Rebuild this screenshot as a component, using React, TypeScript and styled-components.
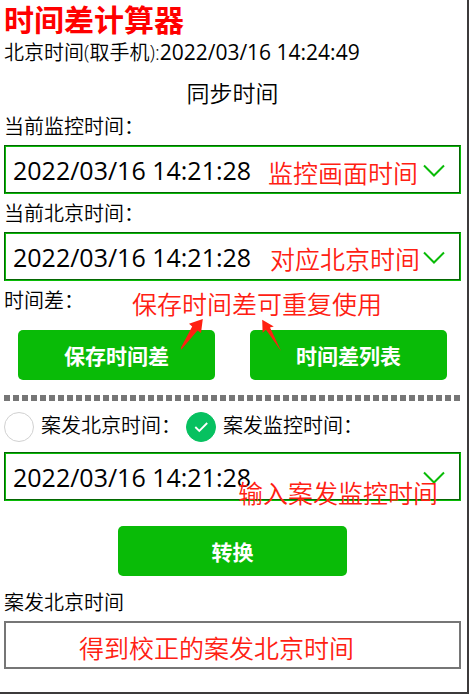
import React, { useState } from "react";
import styled, { createGlobalStyle } from "styled-components";

const GlobalStyle = createGlobalStyle`
  *, *::before, *::after { box-sizing: border-box; }
  body {
    margin: 0;
    background: #fff;
    color: #000;
    font-family: "Open Sans", "Noto Sans CJK SC", sans-serif;
    font-size: 20px;
    font-weight: 350;
  }
`;

const Page = styled.main`
  display: flex;
  flex-direction: column;
  min-height: 100vh;
  padding: 0 6px 23px 4px;
  border-right: 2px solid #3c3a3b;
  border-bottom: 2px solid #3c3a3b;
`;

const Title = styled.h1`
  margin: 0;
  color: #ff0000;
  font-size: 30px;
  font-weight: 700;
  line-height: 40px;
`;

const Clock = styled.p`
  margin: 0;
  line-height: 24px;
`;

const ClockTime = styled.time`
  font-size: 21px;
  font-weight: 400;
`;

const SectionHeading = styled.h2`
  margin: 13px 0 0;
  font-size: 23px;
  font-weight: inherit;
  line-height: 30px;
  text-align: center;
`;

const Label = styled.label`
  display: block;
  padding-top: 1px;
  line-height: 36px;
`;

const Field = styled.div`
  position: relative;
  margin-bottom: 1px;
`;

const TimeSelect = styled.select`
  display: block;
  appearance: none;
  width: 100%;
  height: 49px;
  margin: 0;
  padding: 0 40px 0 7px;
  border: 2px groove #09bb07;
  border-radius: 0;
  background: #fff;
  color: #000;
  font-family: inherit;
  font-size: 25px;
  font-weight: 400;
`;

const Chevron = styled.svg`
  position: absolute;
  top: 19px;
  right: 16px;
  width: 22px;
  height: 14px;
  pointer-events: none;
`;

const Note = styled.span<{ $left: number; $top: number }>`
  position: absolute;
  left: ${(p) => p.$left}px;
  top: ${(p) => p.$top}px;
  color: #ff2012;
  font-size: 25px;
  line-height: 36px;
  white-space: nowrap;
  pointer-events: none;
`;

const DifferenceRow = styled.div`
  position: relative;
  padding-top: 1px;
  line-height: 36px;
`;

const Arrows = styled.svg`
  position: absolute;
  left: 166px;
  top: 28px;
  width: 120px;
  height: 50px;
  z-index: 1;
  pointer-events: none;
`;

const ButtonRow = styled.div`
  display: grid;
  grid-template-columns: 1fr 1fr;
  gap: 35px;
  margin-top: 11px;
  padding: 0 14px;
`;

const Button = styled.button`
  height: 50px;
  padding: 0;
  border: 0;
  border-radius: 5px;
  background: #09bb07;
  color: #fff;
  font-family: inherit;
  font-size: 21px;
  font-weight: 700;
  cursor: pointer;
`;

const ConvertButton = styled(Button)`
  align-self: center;
  width: 50%;
  margin: 24px 0 8px;
`;

const Divider = styled.hr`
  width: 100%;
  height: 6px;
  margin: 15px 0 11px;
  border: 0;
  background: repeating-linear-gradient(to right, #767676 0 6px, transparent 6px 9px);
`;

const Choices = styled.div`
  display: flex;
  gap: 5px;
  margin-bottom: 10px;
`;

const Choice = styled.label`
  display: flex;
  gap: 7px;
  line-height: 28px;
`;

const RadioMark = styled.span`
  display: grid;
  flex: none;
  width: 30px;
  height: 30px;

  & > * {
    grid-area: 1 / 1;
  }
`;

const Radio = styled.input`
  appearance: none;
  width: 30px;
  height: 30px;
  margin: 0;
  border: 1px solid #d1d1d1;
  border-radius: 50%;
  background: #fff;

  &:checked {
    border-color: #07c160;
    background: #07c160;
  }
`;

const Result = styled.input`
  display: block;
  width: 100%;
  height: 48px;
  padding: 0 8px;
  border: 2px solid #767676;
  border-radius: 0;
  background: #fff;
  font-family: inherit;
  font-size: 25px;
`;

const ResultField = styled.div`
  position: relative;
`;

type TimeFieldProps = {
  id?: string;
  label?: string;
  note: string;
  noteLeft: number;
  noteTop: number;
};

function TimeField({ id, label, note, noteLeft, noteTop }: TimeFieldProps) {
  return (
    <Field>
      <TimeSelect id={id} aria-label={label}>
        <option>2022/03/16 14:21:28</option>
      </TimeSelect>
      <Chevron viewBox="0 0 22 14" aria-hidden="true">
        <path d="M1 1.5 11 11.5 21 1.5" fill="none" stroke="#09bb07" strokeWidth="2" />
      </Chevron>
      <Note $left={noteLeft} $top={noteTop}>{note}</Note>
    </Field>
  );
}

const choices = [
  { value: "beijing", text: "案发北京时间：" },
  { value: "monitor", text: "案发监控时间：" },
];

export default function App() {
  const [mode, setMode] = useState("monitor");

  return (
    <>
      <GlobalStyle />
      <Page>
        <Title>时间差计算器</Title>
        <Clock>
          北京时间(取手机):<ClockTime>2022/03/16 14:24:49</ClockTime>
        </Clock>

        <SectionHeading>同步时间</SectionHeading>
        <Label htmlFor="monitor-time">当前监控时间：</Label>
        <TimeField id="monitor-time" note="监控画面时间" noteLeft={264} noteTop={10} />
        <Label htmlFor="beijing-time">当前北京时间：</Label>
        <TimeField id="beijing-time" note="对应北京时间" noteLeft={266} noteTop={9} />

        <DifferenceRow>
          时间差：
          <Note $left={128} $top={4}>保存时间差可重复使用</Note>
          <Arrows viewBox="0 0 120 50" aria-hidden="true">
            <path
              d="M32.8 9 19 13.7 22.2 16.5 11 37.5 11.2 39.7 27.5 20.5 31 23Z M92.2 9.7 103.8 16.5 100 17.4 111 41 96 19.8 92.6 22.7Z"
              fill="#ff2012"
            />
          </Arrows>
        </DifferenceRow>
        <ButtonRow>
          <Button type="button">保存时间差</Button>
          <Button type="button">时间差列表</Button>
        </ButtonRow>

        <Divider />

        <Choices role="radiogroup" aria-label="案发时间">
          {choices.map(({ value, text }) => (
            <Choice key={value}>
              <RadioMark>
                <Radio
                  type="radio"
                  name="mode"
                  value={value}
                  checked={mode === value}
                  onChange={() => setMode(value)}
                />
                {mode === value && (
                  <svg width="30" height="30" viewBox="0 0 30 30" aria-hidden="true">
                    <path d="M9.3 15 13.3 19 21.2 11" fill="none" stroke="#fff" strokeWidth="1.8" />
                  </svg>
                )}
              </RadioMark>
              {text}
            </Choice>
          ))}
        </Choices>
        <TimeField label="案发时间" note="输入案发监控时间" noteLeft={234} noteTop={23} />

        <ConvertButton type="button">转换</ConvertButton>

        <Label htmlFor="result">案发北京时间</Label>
        <ResultField>
          <Result id="result" type="text" readOnly />
          <Note $left={75} $top={9}>得到校正的案发北京时间</Note>
        </ResultField>
      </Page>
    </>
  );
}
